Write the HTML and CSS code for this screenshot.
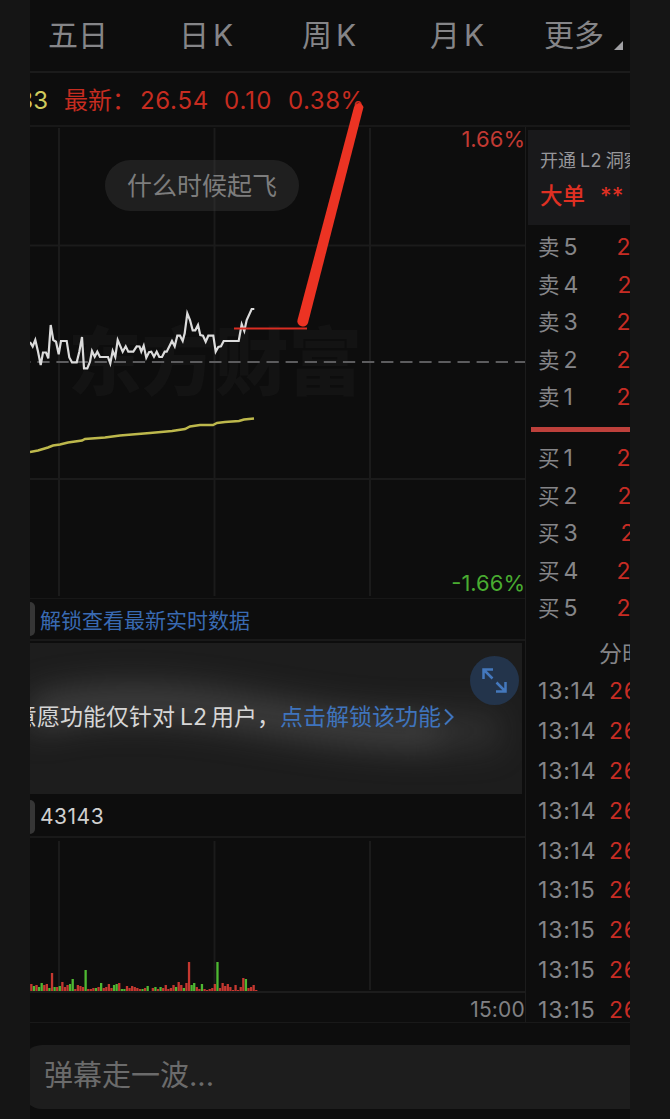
FILE: index.html
```html
<!DOCTYPE html>
<html lang="zh-CN">
<head>
  <meta charset="UTF-8" />
  <meta name="viewport" content="width=device-width, initial-scale=1.0"/>
  <title>分时行情</title>
  <link rel="stylesheet" href="styles.css">
</head>
<body>
  <div class="phone">
    <div class="tabs">
      <span>五日</span>
      <span>日<i>K</i></span>
      <span>周<i>K</i></span>
      <span>月<i>K</i></span>
      <span>更多<b class="corner"></b></span>
    </div>

    <div class="quote">
      <div class="avg">33</div>
      <div class="label">最新：</div>
      <div class="price">26.54</div>
      <div class="change">0.10</div>
      <div class="percent">0.38%</div>
    </div>

    <div class="main">
      <div class="left">
        <div class="price-chart">
          <div class="watermark">东方财富</div>
          <svg class="chart" viewBox="30 127 495 471" width="495" height="471">
            <path class="grid" d="M59 128V596M214.500 128V596M370 128V596M30 245.500H525M30 479H525"/>
            <path class="base" d="M30 362H525"/>
            <polyline class="average" points="30,452 38,450.500 48,447.500 53,445.500 60,444.500 68,442.500 82,440.500 85,439 105,437.500 120,435.500 150,433 172,431 185,429 190,426.500 200,425 213,425 217,423 225,422 239,421 244,419.500 254,418.500"/>
            <polyline class="trend" points="30,342 32.700,346.500 35.300,340 38,351.500 40.700,365 43,352.500 46,352.500 48.300,358.300 50.700,325 53.300,340 56,341.700 58.700,354.300 61,341 66.700,341 69.300,357.500 72,362.300 76.700,362.300 79.300,351.700 82,337 84,368.300 87.300,368.300 90,361.700 92,351 94.700,356.700 97.300,351.700 100,357 108,357 110.300,363.300 112.700,351 115.300,357 117.700,340 122.700,351.700 125.700,346.300 128.300,351.700 133.300,351.700 136.700,346.300 139.500,346.500 141.300,351.700 143.700,345.700 146.300,357.700 149,352.300 151.300,351.700 154,356.700 156.700,351.700 159.300,357 162,357 164.700,351.700 166.700,351.700 172,341 174.700,346.300 177.300,335.700 180,335.700 182.700,341 184.700,333.300 187.300,313.300 190,320 192.700,330.300 195.300,330.300 198,325 200.300,335 203,335.700 205.700,341.700 208.300,335.700 213.300,335.700 215.700,351.700 218.300,347 221,346.300 223.700,341 238.700,341 241.700,324.300 244.300,331 246.700,320 251.700,309 254.300,309"/>
          </svg>
          <div class="bullet">什么时候起飞</div>
          <div class="high">1.66%</div>
          <div class="low">-1.66%</div>
        </div>

        <div class="info unlock"><span class="tag"></span>解锁查看最新实时数据</div>

        <div class="banner">
          <svg class="glow" viewBox="30 643 492 151" width="492" height="151">
            <path d="M10 724C70 698 150 696 230 709S370 734 440 733"/>
            <path class="tail" d="M10 720C100 690 200 706 280 719S420 734 500 730"/>
          </svg>
          <p>意愿功能仅针对<em>L2</em>用户，</p>
          <a>点击解锁该功能<svg width="12" height="18" viewBox="0 0 12 18"><path d="M2 1.500L9.500 9L2 16.500"/></svg></a>
          <div class="expand">
            <svg width="25" height="25" viewBox="0 0 25 25"><path d="M1.500 11V1.500H11M1.500 1.500L10.500 10.500M23.500 14V23.500H14M14.500 14.500L23.500 23.500"/></svg>
          </div>
        </div>

        <div class="info volume"><span class="tag"></span>43143</div>

        <div class="volume-chart">
          <svg class="chart" viewBox="30 838 495 153" width="495" height="153">
            <path class="grid" d="M59 841V990M214.500 841V990M370 841V990"/>
            <g id="bars"></g>
          </svg>
        </div>
        <div class="time">15:00</div>
      </div>

      <div class="right">
        <div class="level2">
          <div class="open">开通<em>L2</em>洞察</div>
          <div class="big">大单<span>**</span></div>
        </div>
        <div class="book">
          <div>卖<i>5</i><b>26</b></div>
          <div>卖<i>4</i><b class="p1">26</b></div>
          <div>卖<i>3</i><b>26</b></div>
          <div>卖<i>2</i><b>26</b></div>
          <div>卖<i>1</i><b>26</b></div>
        </div>
        <div class="split"></div>
        <div class="book">
          <div>买<i>1</i><b>26</b></div>
          <div>买<i>2</i><b class="p1">26</b></div>
          <div>买<i>3</i><b class="p2">26</b></div>
          <div>买<i>4</i><b>26</b></div>
          <div>买<i>5</i><b>26</b></div>
        </div>
        <div class="ticks-title">分时</div>
        <div class="ticks">
          <div><span>13:14</span><b>26</b></div>
          <div><span>13:14</span><b>26</b></div>
          <div><span>13:14</span><b>26</b></div>
          <div><span>13:14</span><b>26</b></div>
          <div><span>13:14</span><b>26</b></div>
          <div><span>13:15</span><b>26</b></div>
          <div><span>13:15</span><b>26</b></div>
          <div><span>13:15</span><b>26</b></div>
          <div><span>13:15</span><b>26</b></div>
        </div>
      </div>
    </div>

    <div class="comment">弹幕走一波...</div>

    <!-- hand drawn mark over the chart -->
    <svg class="mark" width="140" height="240" viewBox="230 95 140 240">
      <path class="thin" d="M234 328.500H307"/>
      <path class="thick" d="M354 107Q359 99 363.500 107L308 323A5.500 5.500 0 0 1 297.500 320Z"/>
    </svg>
  </div>

  <script src="script.js"></script>
</body>
</html>
```
FILE: styles.css
```css
body {
  margin: 0;
  background: #151515;
  font-family: Inter, "Noto Sans CJK SC", sans-serif;
  color: #858588;
}

i, em, b {
  font-style: normal;
  font-weight: 400;
  flex-shrink: 0;
}

.phone {
  position: relative;
  margin: 0 auto 0 30px;
  width: 600px;
  height: 1119px;
  background: #0d0d0d;
  overflow: hidden;
  white-space: nowrap;
}

.tabs {
  display: grid;
  grid-template-columns: 131px 123px 128px 114px 86px;
  padding-left: 18px;
  height: 71px;
  line-height: 71px;
  font-size: 30px;
  border-bottom: 2px solid #1b1b1b;
}

.tabs i {
  margin-left: 4px;
}

.corner {
  display: inline-block;
  margin-left: 10px;
  border-left: 9px solid transparent;
  border-bottom: 9px solid #a0a0a3;
  vertical-align: -4px;
}

.quote {
  display: flex;
  height: 52px;
  line-height: 55px;
  font-size: 24px;
  color: #c62c20;
  border-bottom: 2px solid #181818;
}

.avg {
  width: 18px;
  display: flex;
  justify-content: flex-end;
  color: #d0cb5c;
}

.label {
  width: 76px;
  margin-left: 16px;
}

.price {
  width: 84px;
  letter-spacing: 0.7px;
}

.change {
  width: 64px;
  letter-spacing: 1px;
}

.percent {
  letter-spacing: 0.5px;
}

.main {
  display: flex;
  height: 895px;
  border-bottom: 1px solid #191919;
  overflow: hidden;
}

.left {
  width: 495px;
  flex-shrink: 0;
  border-right: 1px solid #1c1c1c;
}

.price-chart {
  position: relative;
  height: 471px;
  border-bottom: 1px solid #171717;
}

.chart {
  display: block;
  position: relative;
  fill: none;
}

.grid {
  stroke: #1b1b1b;
  stroke-width: 2;
}

.base {
  stroke: #5c5c5e;
  stroke-width: 2.200;
  stroke-dasharray: 12.300 6.800;
  stroke-dashoffset: 11.800;
}

.trend {
  stroke: #dcdcdc;
  stroke-width: 2.200;
}

.average {
  stroke: #bdb84c;
  stroke-width: 2.500;
}

.watermark {
  position: absolute;
  left: 38px;
  top: 184px;
  line-height: 104px;
  font-size: 73.500px;
  font-weight: 900;
  color: #131313;
}

.bullet {
  position: absolute;
  left: 75px;
  top: 33px;
  width: 194px;
  height: 51px;
  line-height: 53px;
  border-radius: 26px;
  background: rgba(60, 60, 60, 0.4);
  text-align: center;
  font-size: 25px;
  color: #7d7d7d;
}

.high, .low {
  position: absolute;
  right: 0;
  font-size: 22px;
  line-height: 26px;
}

.high {
  top: -1px;
  color: #c23a33;
}

.low {
  bottom: 2px;
  color: #49ac31;
}

.info {
  display: flex;
  align-items: center;
  height: 40px;
  font-size: 21px;
  border-bottom: 2px solid #191919;
}

.tag {
  width: 5px;
  height: 34px;
  margin-right: 5px;
  border-radius: 0 5px 5px 0;
  background: #363636;
}

.unlock {
  color: #396ab2;
}

.banner {
  position: relative;
  display: flex;
  align-items: center;
  width: 492px;
  height: 151px;
  margin: 2px 0 3px;
  box-sizing: border-box;
  padding-bottom: 8px;
  font-size: 23px;
  background: #1d1d1d;
  overflow: hidden;
}

.glow {
  position: absolute;
  left: 0;
  top: 0;
  fill: none;
  stroke: rgba(120, 120, 120, 0.28);
  stroke-width: 26;
  filter: blur(16px);
}

.tail {
  stroke: rgba(120, 120, 120, 0.18);
  stroke-width: 40;
}

.banner p, .banner a {
  position: relative;
}

.banner p {
  margin: 0 0 0 -16px;
  color: #d6d6d6;
}

.banner em {
  margin: 0 4px 0 5px;
}

.banner a {
  color: #3f74bd;
}

.banner a svg {
  fill: none;
  stroke: #3f74bd;
  stroke-width: 2;
  margin-left: 2px;
  vertical-align: -1px;
}

.expand {
  position: absolute;
  left: 440px;
  top: 13px;
  width: 49px;
  height: 49px;
  border-radius: 50%;
  background: #23344b;
  display: flex;
  align-items: center;
  justify-content: center;
}

.expand svg {
  fill: none;
  stroke: #4478bd;
  stroke-width: 2.500;
}

.volume {
  height: 39px;
  color: #d0d0d0;
  letter-spacing: 0.5px;
}

.volume-chart {
  height: 153px;
  border-bottom: 2px solid #1c1c1c;
}

.time {
  font-size: 21px;
  line-height: 34px;
  text-align: right;
  letter-spacing: 0.2px;
  color: #808083;
}

.right {
  width: 104px;
  overflow: hidden;
}

.level2 {
  height: 95px;
  margin: 3px 0 3px 2px;
  padding-left: 12px;
  box-sizing: border-box;
  background: #19191b;
}

.open {
  padding-top: 14px;
  line-height: 34px;
  font-size: 18px;
  color: #97979a;
}

.open em {
  margin: 0 4px;
  letter-spacing: 0.3px;
}

.big {
  line-height: 36px;
  font-size: 22.500px;
  font-weight: 500;
  color: #df3023;
}

.big span {
  margin-left: 15px;
}

.book div {
  display: flex;
  padding-left: 12px;
  height: 37.600px;
  line-height: 38px;
  font-size: 21.500px;
}

.book i {
  width: 53px;
  margin-left: 4px;
  font-size: 23px;
}

.book b, .ticks b {
  font-size: 23px;
  color: #c62c24;
}

.book .p1 {
  margin-left: 1px;
}

.book .p2 {
  margin-left: 4px;
}

.split {
  height: 5px;
  margin: 11px 0 7px 5px;
  background: #bd403b;
}

.ticks-title {
  padding: 9px 0 0 73px;
  line-height: 36px;
  font-size: 23px;
}

.ticks div {
  display: flex;
  padding-left: 12px;
  height: 39.900px;
  line-height: 38px;
  font-size: 23px;
  letter-spacing: 0.8px;
}

.ticks span {
  width: 71px;
  flex-shrink: 0;
}

.comment {
  height: 64px;
  margin: 22px -20px 0 -8px;
  padding-left: 22px;
  line-height: 61px;
  border-radius: 20px;
  background: #1d1d1d;
  color: #6b6b6b;
  font-size: 29px;
}

.mark {
  position: absolute;
  left: 200px;
  top: 95px;
}

.thin {
  stroke: #d92d22;
  stroke-width: 2;
}

.thick {
  fill: #ec3323;
}
```
FILE: script.js
```javascript
// one entry per minute: direction and height in px
const volumes = 'r7 g5 r6 g4 g8 r6 r7 g3 r18 g4 r4 g5 r9 r4 r6 g7 g12 r2 r6 r5 r4 g21 r2 r2 r3 g3 r4 g8 r3 r4 r7 r3 g6 g7 r8 g2 g2 r5 r3 r5 r4 r3 r2 g2 r3 g5 r0 r3 g4 r2 g4 r3 r6 r2 r3 r6 g4 r9 r6 g3 r8 r29 g6 g8 r4 r2 g7 r2 r1 r2 r3 r7 g29 r3 r8 r5 r7 r4 r1 r6 r1 r4 r13 g12 r3 r4 r6 r1';

let bars = document.getElementById('bars');
volumes.split(' ').forEach((v, i) => {
  let h = Number(v.slice(1));
  let bar = document.createElementNS('http://www.w3.org/2000/svg', 'rect');
  bar.setAttribute('x', 30.2 + i * 2.585);
  bar.setAttribute('y', 991 - h);
  bar.setAttribute('width', 2.3);
  bar.setAttribute('height', h);
  bar.setAttribute('fill', v[0] === 'r' ? '#c43830' : '#4eb832');
  bars.appendChild(bar);
});
```
